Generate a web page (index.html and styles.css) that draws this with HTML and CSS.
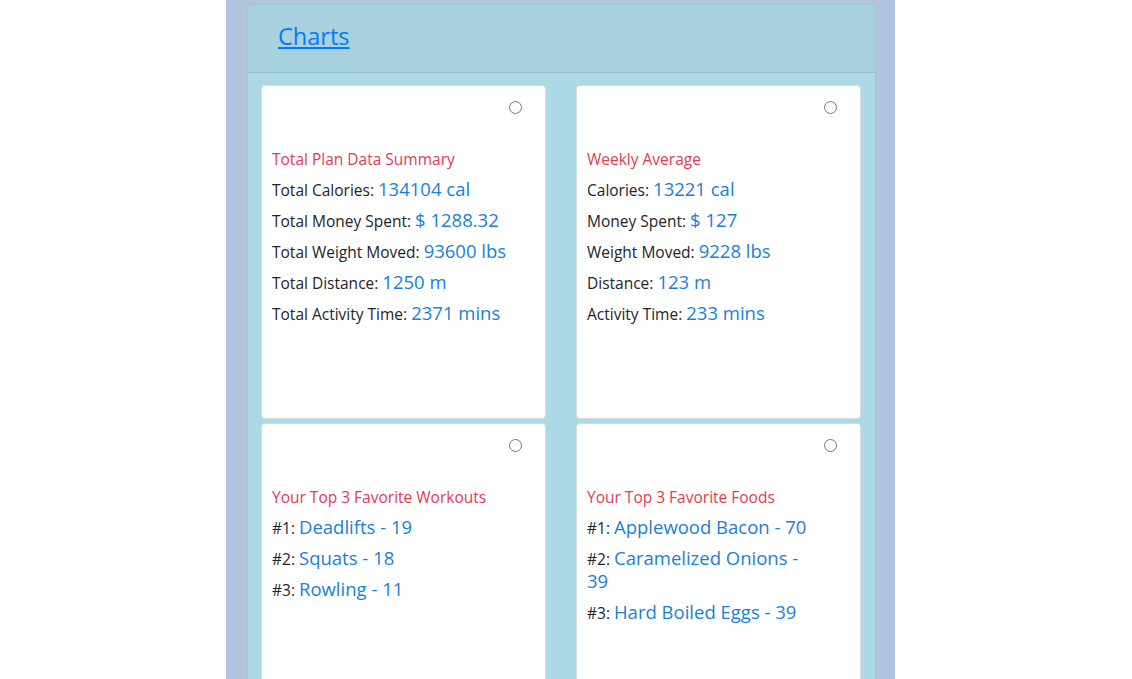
FILE: index.html
```html
<!DOCTYPE html>
<html>
<head>
<meta charset="utf-8">
<link rel="stylesheet" href="styles.css">
</head>
<body>
<div class="wrap">
  <div class="panel">
    <div class="panel-header"><a href="#" class="title-link">Charts</a></div>
    <div class="grid">
      <div class="tile">
        <div class="radio-row"><span class="radio"></span></div>
        <div class="content">
          <div class="heading">Total Plan Data Summary</div>
          <p class="line"><span class="lbl">Total Calories: </span><span class="val">134104 cal</span></p>
          <p class="line"><span class="lbl">Total Money Spent: </span><span class="val">$ 1288.32</span></p>
          <p class="line"><span class="lbl">Total Weight Moved: </span><span class="val">93600 lbs</span></p>
          <p class="line"><span class="lbl">Total Distance: </span><span class="val">1250 m</span></p>
          <p class="line"><span class="lbl">Total Activity Time: </span><span class="val">2371 mins</span></p>
        </div>
      </div>
      <div class="tile">
        <div class="radio-row"><span class="radio"></span></div>
        <div class="content">
          <div class="heading">Weekly Average</div>
          <p class="line"><span class="lbl">Calories: </span><span class="val">13221 cal</span></p>
          <p class="line"><span class="lbl">Money Spent: </span><span class="val">$ 127</span></p>
          <p class="line"><span class="lbl">Weight Moved: </span><span class="val">9228 lbs</span></p>
          <p class="line"><span class="lbl">Distance: </span><span class="val">123 m</span></p>
          <p class="line"><span class="lbl">Activity Time: </span><span class="val">233 mins</span></p>
        </div>
      </div>
      <div class="tile">
        <div class="radio-row"><span class="radio"></span></div>
        <div class="content">
          <div class="heading">Your Top 3 Favorite Workouts</div>
          <p class="line"><span class="lbl">#1: </span><span class="val">Deadlifts - 19</span></p>
          <p class="line"><span class="lbl">#2: </span><span class="val">Squats - 18</span></p>
          <p class="line"><span class="lbl">#3: </span><span class="val">Rowling - 11</span></p>
        </div>
      </div>
      <div class="tile">
        <div class="radio-row"><span class="radio"></span></div>
        <div class="content">
          <div class="heading">Your Top 3 Favorite Foods</div>
          <p class="line"><span class="lbl">#1: </span><span class="val">Applewood Bacon - 70</span></p>
          <p class="line"><span class="lbl">#2: </span><span class="val">Caramelized Onions - 39</span></p>
          <p class="line"><span class="lbl">#3: </span><span class="val">Hard Boiled Eggs - 39</span></p>
        </div>
      </div>
    </div>
  </div>
</div>
</body>
</html>
```
FILE: styles.css
```css
html, body {
  margin: 0;
  padding: 0;
  background: #ffffff;
  font-family: "Open Sans", "Noto Sans", sans-serif;
  color: #212529;
}
.wrap {
  width: 669px;
  margin-left: 226px;
  background: #b0c4de;
  padding: 4px 19px 0 21px;
  box-sizing: border-box;
  min-height: 679px;
}
.panel {
  background: #add8e6;
  border: 1px solid #9fc8d6;
  border-bottom: none;
  border-radius: 4px 4px 0 0;
}
.panel-header {
  height: 68px;
  background: #a7d1df;
  border-bottom: 1px solid #93bfcd;
  border-radius: 3px 3px 0 0;
  padding-left: 30px;
  box-sizing: border-box;
  display: flex;
  align-items: center;
}
.title-link {
  font-size: 23.5px;
  color: #007bff;
  text-decoration: underline;
  line-height: 1;
  margin-top: -4px;
}
.grid {
  display: grid;
  grid-template-columns: 285px 285px;
  column-gap: 30px;
  row-gap: 4px;
  padding: 12px 0 0 13px;
}
.tile {
  height: 334px;
  background: #ffffff;
  border: 1px solid #d6dde0;
  border-radius: 4px;
  box-sizing: border-box;
  padding: 15px 23px 0 10px;
}
.radio-row {
  display: flex;
  justify-content: flex-end;
  height: 13px;
}
.radio {
  width: 13px;
  height: 13px;
  box-sizing: border-box;
  border: 1px solid #767676;
  border-radius: 50%;
}
.content {
  margin-top: 30px;
  width: 235.5px;
}
.heading {
  color: #e23b55;
  font-size: 15.5px;
  line-height: 30px;
  height: 30px;
  margin-bottom: 2.5px;
}
.line {
  margin: 0 0 8px 0;
  font-size: 18.5px;
  line-height: 23px;
}
.lbl {
  font-size: 15.5px;
  line-height: 17px;
}
.val {
  color: #1b7fd6;
  font-weight: 500;
}
```
